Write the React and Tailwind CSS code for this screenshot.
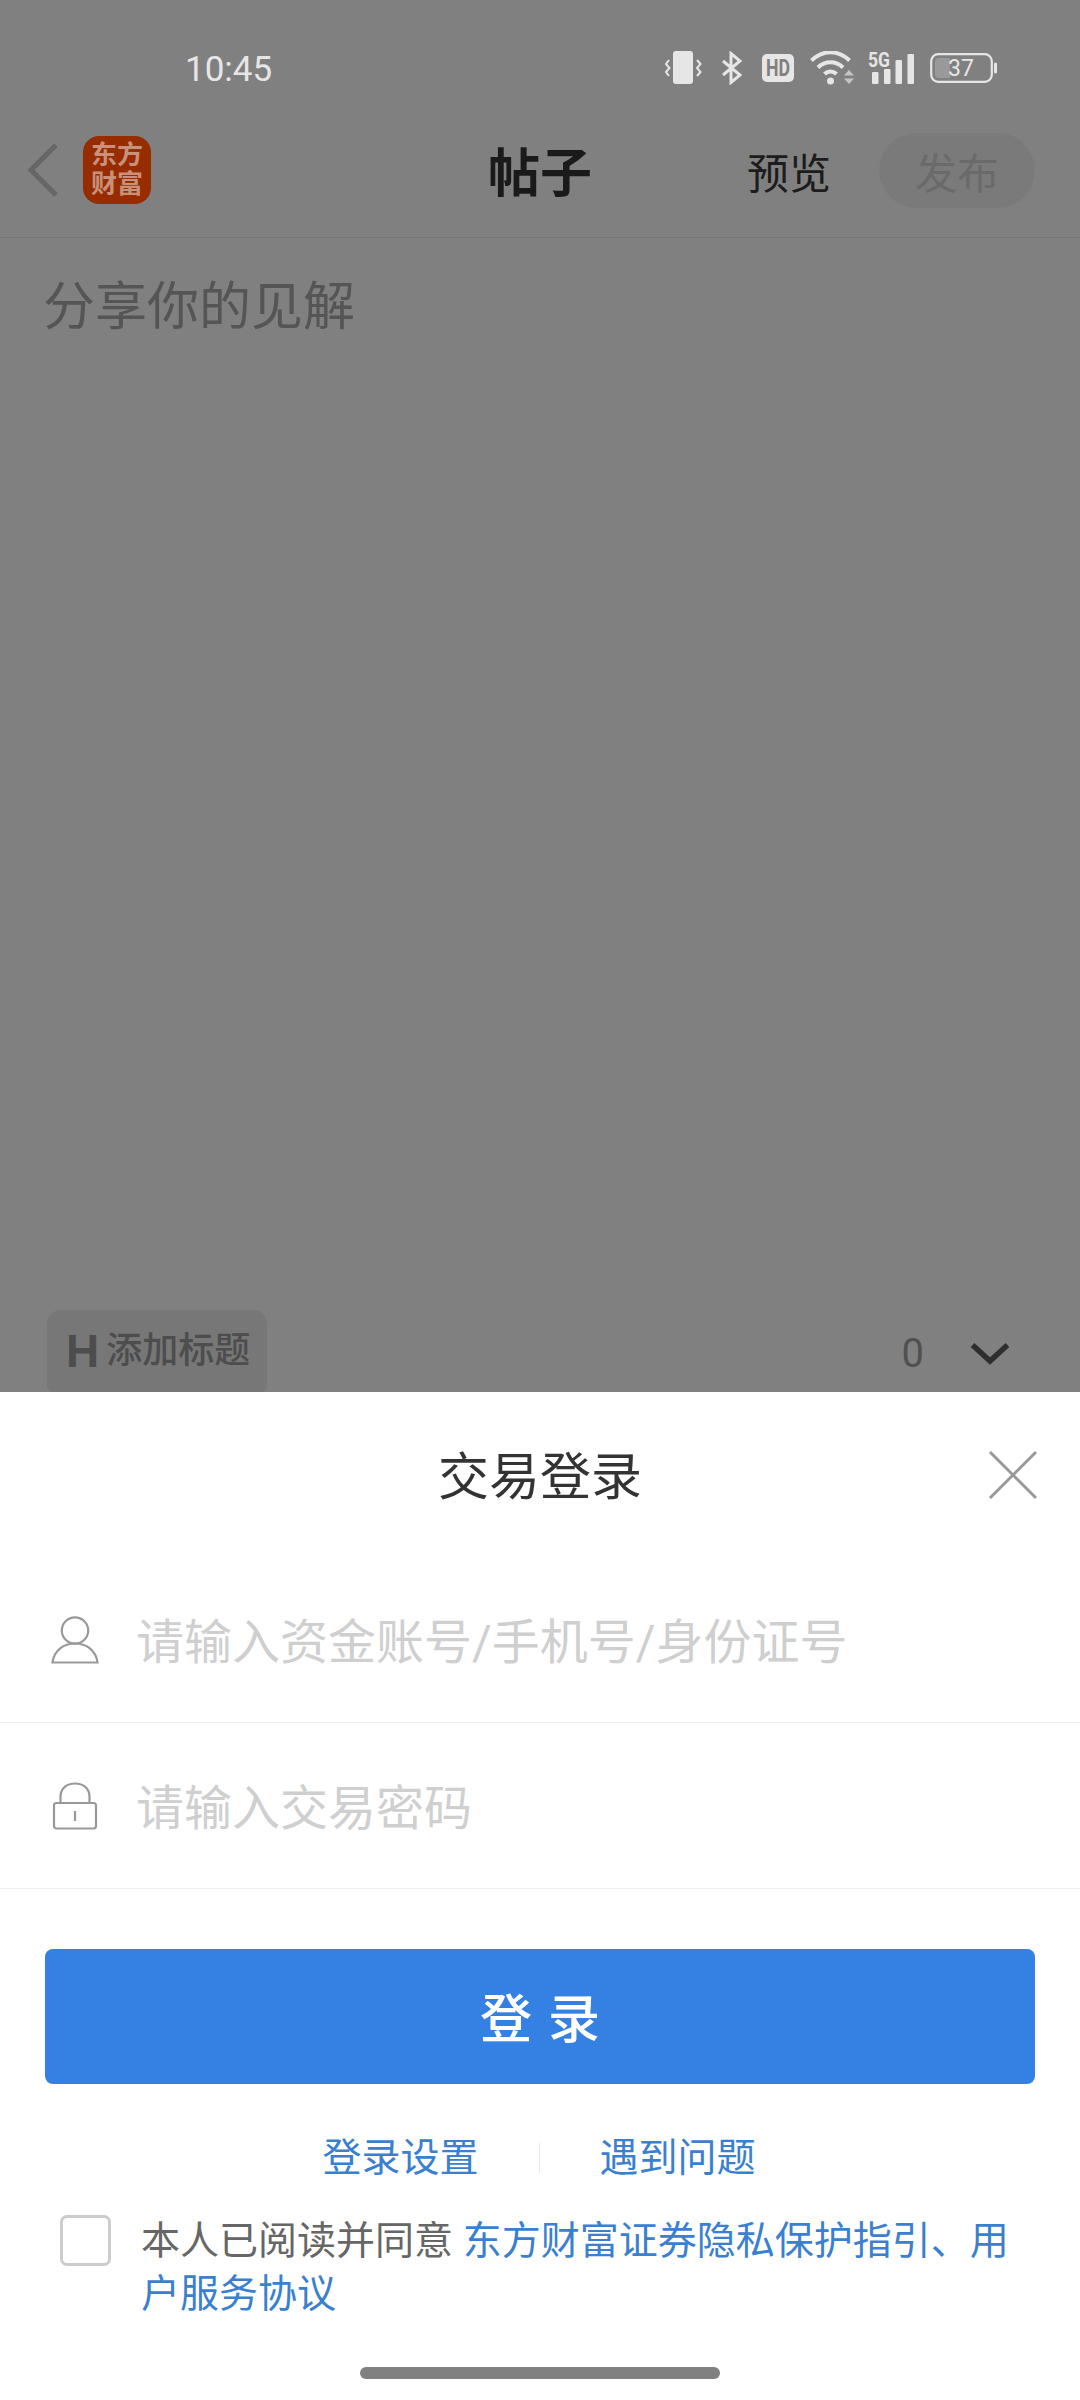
const cjk = "font-['Roboto','Noto_Sans_CJK_SC',sans-serif]";

function StatusIcons() {
  return (
    <div className="flex items-center">
      <svg width="37" height="34" viewBox="0 0 37 34" fill="none">
        <rect x="8" y="0" width="20" height="33" rx="3" fill="#e6e6e6" />
        <path d="M4 9 L1 13 L4.5 17 L1 21 L4 25" stroke="#e6e6e6" strokeWidth="2" />
        <path d="M32 9 L35.5 13 L32 17 L35.5 21 L32 25" stroke="#e6e6e6" strokeWidth="2" />
      </svg>
      <svg className="ml-[19px]" width="22" height="34" viewBox="0 0 22 34" fill="none">
        <path d="M2 10 L19 24 L10 31.5 V2.5 L19 10 L2 24" stroke="#e6e6e6" strokeWidth="3" />
      </svg>
      <svg className="ml-[19px] overflow-visible" width="32" height="28" viewBox="0 0 32 28">
        <rect width="32" height="28" rx="5" fill="#e6e6e6" />
        <text x="16" y="22" textAnchor="middle" fontFamily="Roboto" fontWeight="700" fontSize="23" textLength="24" lengthAdjust="spacingAndGlyphs" fill="#808080">HD</text>
      </svg>
      <svg className="ml-[16px]" width="44" height="34" viewBox="0 0 44 34" fill="none">
        <path d="M1.5 9.5 C13 -1.5 28 -1.5 39.5 9.5" stroke="#e6e6e6" strokeWidth="4" />
        <path d="M8 16.5 C15 9.5 26 9.5 33 16.5" stroke="#e6e6e6" strokeWidth="4" />
        <path d="M14.5 23 C18 19.5 23 19.5 26.5 23" stroke="#e6e6e6" strokeWidth="4" />
        <circle cx="20.5" cy="30" r="3.5" fill="#e6e6e6" />
        <path d="M34 24.5 L39 19 L44 24.5 Z" fill="#c4c4c4" />
        <path d="M34 27.5 L39 33 L44 27.5 Z" fill="#c4c4c4" />
      </svg>
      <svg className="ml-[14px] overflow-visible" width="46" height="34" viewBox="0 0 46 34">
        <text x="0" y="16" fontFamily="Roboto" fontWeight="700" fontSize="21" textLength="22" lengthAdjust="spacingAndGlyphs" fill="#e6e6e6">5G</text>
        <rect x="4" y="21" width="6.5" height="12" rx="1" fill="#e6e6e6" />
        <rect x="16" y="18" width="6.5" height="15" rx="1" fill="#e6e6e6" />
        <rect x="27.5" y="9" width="6.5" height="24" rx="1" fill="#e6e6e6" />
        <rect x="39.5" y="3" width="6.5" height="30" rx="1" fill="#e6e6e6" />
      </svg>
      <svg className="ml-[16px]" width="67" height="30" viewBox="0 0 67 30">
        <rect x="1.2" y="1.2" width="60.6" height="27.6" rx="7" fill="none" stroke="#e6e6e6" strokeWidth="2.2" />
        <path d="M9 5 H20 V25 H9 A4 4 0 0 1 5 21 V9 A4 4 0 0 1 9 5 Z" fill="#999999" />
        <text x="31" y="23" textAnchor="middle" fontFamily="Roboto" fontSize="23" fill="#e6e6e6">37</text>
        <rect x="64" y="9.5" width="3" height="11" rx="1.5" fill="#e6e6e6" />
      </svg>
    </div>
  );
}

function Header() {
  return (
    <div className="flex items-center h-[135px] border-b border-[#767676]">
      <div className="flex-1 flex items-center">
        <svg className="ml-[27px]" width="32" height="56" viewBox="0 0 32 56" fill="none">
          <path d="M29 3 L4 28 L29 53" stroke="#666666" strokeWidth="5" />
        </svg>
        <div className="ml-[24px] w-[68px] h-[68px] rounded-[16px] bg-[#972c00] flex flex-col items-center justify-center text-[#c9917b] text-[26px] leading-[29px] font-bold">
          <span>东方</span>
          <span>财富</span>
        </div>
      </div>
      <div className="mt-[10px] text-[52px] font-bold text-[#1a1a1a]">帖子</div>
      <div className="flex-1 flex items-center justify-end">
        <span className="mt-[8px] text-[42px] text-[#1c1c1c] mr-[48px]">预览</span>
        <div className="w-[156px] h-[75px] mr-[45px] pt-[8px] rounded-full bg-[#7a7a7a] flex items-center justify-center text-[42px] text-[#6a6a6a]">发布</div>
      </div>
    </div>
  );
}

function UserIcon() {
  return (
    <svg width="48" height="48" viewBox="0 0 48 48" fill="none" stroke="#999999" strokeWidth="2.2">
      <circle cx="24" cy="14.5" r="13.2" />
      <path d="M1.5 46.5 C3 34 13 27.5 24 27.5 C35 27.5 45 34 46.5 46.5 Z" />
    </svg>
  );
}

function LockIcon() {
  return (
    <svg width="48" height="48" viewBox="0 0 48 48" fill="none" stroke="#999999" strokeWidth="2.2">
      <path d="M9.5 21 V15 C9.5 6 16 1.5 24 1.5 C32 1.5 38.5 6 38.5 15 V21" />
      <rect x="3" y="21" width="42" height="25.5" rx="2.5" />
      <path d="M24 29 V39" />
    </svg>
  );
}

function InputRow({ icon, placeholder }) {
  return (
    <div className="flex items-center h-[166px] border-b border-[#eeeeee] pl-[51px]">
      <div className="w-[48px] flex justify-center">{icon}</div>
      <span className="ml-[37px] mt-[7px] text-[48px] text-[#cfcfcf]">{placeholder}</span>
    </div>
  );
}

export default function App() {
  return (
    <div className={`w-[1080px] h-[2400px] flex flex-col bg-[#808080] ${cjk}`}>
      <div className="flex-1 flex flex-col overflow-hidden">
        <div className="flex items-center h-[34px] mt-[51px] mb-[18px] pl-[185px] pr-[83px] justify-between">
          <span className="mt-[4px] text-[35px] text-[#e6e6e6]">10:45</span>
          <StatusIcons />
        </div>
        <Header />
        <div className="flex-1 pl-[43px] pt-[26px] text-[52px] text-[#555555] leading-[88px]">分享你的见解</div>
        <div className="flex items-start justify-between pl-[47px] pr-[70px]">
          <div className="w-[220px] h-[82px] rounded-t-[14px] rounded-b-[6px] bg-[#777777] flex items-center pl-[19px] text-[#4d4d4d]">
            <span className="font-['Liberation_Sans',sans-serif] font-bold text-[46px] leading-none">H</span>
            <span className="ml-[7px] text-[36px] font-medium">添加标题</span>
          </div>
          <div className="flex items-center mt-[21px]">
            <span className="ml-[2px] text-[40px] leading-[46px] text-[#505050]">0</span>
            <svg className="ml-[46px]" width="40" height="24" viewBox="0 0 40 24" fill="none">
              <path d="M2.5 3 L20 19 L37.5 3" stroke="#2e2e2e" strokeWidth="5.5" />
            </svg>
          </div>
        </div>
      </div>

      <div className="h-[1008px] bg-white flex flex-col">
        <div className="relative h-[165px] flex items-center justify-center">
          <span className="mt-[8px] text-[51px] text-[#333333]">交易登录</span>
          <svg className="absolute right-[42px] top-[58px]" width="50" height="50" viewBox="0 0 50 50" fill="none">
            <path d="M2 2 L48 48 M48 2 L2 48" stroke="#999999" strokeWidth="3" />
          </svg>
        </div>
        <InputRow icon={<UserIcon />} placeholder="请输入资金账号/手机号/身份证号" />
        <InputRow icon={<LockIcon />} placeholder="请输入交易密码" />
        <button className="mt-[60px] mx-[45px] h-[135px] pt-[8px] rounded-[8px] bg-[#3480e3] text-white text-[52px] font-medium tracking-[16px] pl-[16px]">登录</button>
        <div className="mt-[52px] pr-[2px] flex items-center justify-center text-[39px] text-[#3a7fd0] leading-[44px]">
          <span>登录设置</span>
          <div className="mx-[60px] w-px h-[30px] bg-[#e8e8e8]"></div>
          <span>遇到问题</span>
        </div>
        <div className="mt-[35px] flex items-start pl-[60px] pr-[36px]">
          <div className="w-[51px] h-[51px] shrink-0 rounded-[7px] border-[3px] border-[#cccccc]"></div>
          <p className="ml-[30px] text-[39px] leading-[53px] text-[#666666]">
            本人已阅读并同意 <span className="text-[#3a7fd0]">东方财富证券隐私保护指引、用户服务协议</span>
          </p>
        </div>
        <div className="mt-auto mb-[21px] mx-auto w-[360px] h-[12px] rounded-full bg-[#808080]"></div>
      </div>
    </div>
  );
}
